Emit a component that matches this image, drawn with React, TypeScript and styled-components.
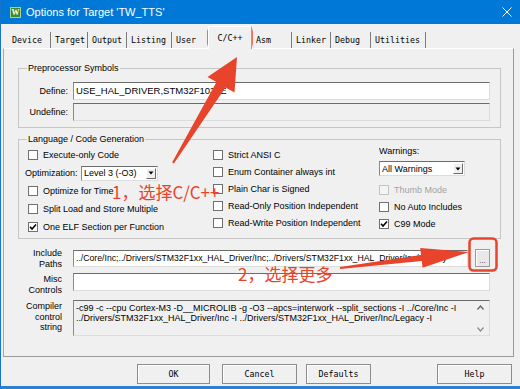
import React from "react";
import styled, { createGlobalStyle } from "styled-components";

const UI = `"Liberation Sans", Arial, sans-serif`;
const MONO = `"DejaVu Sans Mono", "Liberation Mono", monospace`;
const RED = "#e8442c";

const Global = createGlobalStyle`
  html, body { margin: 0; padding: 0; background: #f0f0f0; }
  body { width: 520px; height: 389px; overflow: hidden; }
`;

const Window = styled.div`
  position: relative;
  width: 520px;
  height: 389px;
  box-sizing: border-box;
  background: #f0f0f0;
  border-left: 1px solid #1a73c9;
  border-bottom: 3px solid #2b80d6;
  display: flex;
  flex-direction: column;
  font-family: ${UI};
  font-size: 9px;
  color: #000;
  overflow: hidden;
`;

const TitleBar = styled.div`
  height: 24px;
  flex: none;
  background: #0078d7;
  display: flex;
  align-items: center;
  padding-left: 9px;
  gap: 5px;
  color: #fff;
  font-family: ${UI};
  font-size: 11px;
`;

const AppIcon = styled.span`
  width: 11px;
  height: 11px;
  box-sizing: border-box;
  background: #3f8a2a;
  border: 1px solid #a9d08e;
  color: #fff;
  font: bold 8px/9px "Liberation Serif", serif;
  text-align: center;
  display: inline-block;
`;

const TitleText = styled.span`
  flex: 1;
  white-space: nowrap;
`;

const CloseBox = styled.span`
  width: 10px;
  height: 10px;
  margin-right: 8px;
  display: flex;
`;

const TabStrip = styled.div`
  display: flex;
  align-items: flex-end;
  height: 24px;
  flex: none;
  padding-left: 7px;
  position: relative;
  z-index: 1;
`;

const Tab = styled.div<{ $w: number; $sep?: boolean }>`
  width: ${(p) => p.$w}px;
  height: 16px;
  box-sizing: border-box;
  padding-left: 4px;
  border-right: ${(p) => (p.$sep ? "1px solid #7c7c7c" : "none")};
  font-family: ${MONO};
  font-size: 8.3px;
  line-height: 16px;
  white-space: nowrap;
`;

const ActiveTab = styled.div<{ $w: number }>`
  width: ${(p) => p.$w}px;
  height: 23px;
  margin-bottom: -1px;
  box-sizing: border-box;
  background: #f0f0f0;
  border-top: 1px solid #fff;
  border-left: 1px solid #fff;
  border-right: 1px solid #a0a0a0;
  display: flex;
  align-items: center;
  justify-content: center;
  font-family: ${MONO};
  font-size: 8.3px;
  white-space: nowrap;
`;

const Panel = styled.div`
  margin: 0 6px 0 2px;
  flex: none;
  border-top: 1px solid #ffffff;
  border-left: 1px solid #a8a8a8;
  border-right: 1px solid #9a9a9a;
  border-bottom: 1px solid #9a9a9a;
  padding: 14px 12px 20px 14px;
  display: flex;
  flex-direction: column;
`;

const Group = styled.fieldset<{ $mt: number }>`
  margin: ${(p) => p.$mt}px 0 0 0;
  padding: 0;
  border: 1px solid #c6c6c6;
  min-inline-size: 0;
`;

const Caption = styled.legend`
  margin-left: 8px;
  padding: 0 1px;
  font-size: 9px;
  line-height: 10px;
`;

const SymbolsGrid = styled.div`
  display: grid;
  grid-template-columns: 49px 417px;
  column-gap: 5px;
  row-gap: 3px;
  grid-auto-rows: 18px;
  padding: 9px 0 6px 0;
`;

const FieldLabel = styled.div`
  text-align: right;
  align-self: center;
  white-space: nowrap;
`;

const TextBox = styled.div<{ $bg?: string; $fs?: number; $h?: number }>`
  height: ${(p) => p.$h ?? 18}px;
  box-sizing: border-box;
  background: ${(p) => p.$bg ?? "#fff"};
  border-top: 1px solid #6b6b6b;
  border-left: 1px solid #8a8a8a;
  border-right: 1px solid #dcdcdc;
  border-bottom: 1px solid #dcdcdc;
  padding-left: 2px;
  font-size: ${(p) => p.$fs ?? 9}px;
  line-height: ${(p) => (p.$h ?? 18) - 2}px;
  white-space: nowrap;
  overflow: hidden;
  flex: 1;
  min-width: 0;
`;

const CodeGenGrid = styled.div`
  display: grid;
  grid-template-columns: 185px 166px 1fr;
  padding: 2px 0 2px 9px;
`;

const Column = styled.div<{ $row: number }>`
  display: grid;
  grid-auto-rows: ${(p) => p.$row}px;
  align-content: start;
`;

const StackColumn = styled.div`
  display: flex;
  flex-direction: column;
  align-items: flex-start;
`;

const CheckRow = styled.div<{ $h?: number; $off?: boolean }>`
  height: ${(p) => p.$h ?? 18}px;
  display: flex;
  align-items: center;
  gap: 5px;
  white-space: nowrap;
  color: ${(p) => (p.$off ? "#a3a3a3" : "#000")};
`;

const Box = styled.span<{ $off?: boolean }>`
  width: 10px;
  height: 10px;
  box-sizing: border-box;
  flex: none;
  background: ${(p) => (p.$off ? "#f4f4f4" : "#fff")};
  border: 1px solid ${(p) => (p.$off ? "#c4c4c4" : "#707070")};
  display: flex;
  align-items: center;
  justify-content: center;
`;

const OptRow = styled.div`
  display: flex;
  align-items: center;
  margin-left: -3px;
  white-space: nowrap;
`;

const OptLabel = styled.span`
  width: 56px;
  flex: none;
`;

const Select = styled.div<{ $w: number }>`
  width: ${(p) => p.$w}px;
  height: 15px;
  box-sizing: border-box;
  background: #fff;
  border-top: 1px solid #6b6b6b;
  border-left: 1px solid #8a8a8a;
  border-right: 1px solid #dcdcdc;
  border-bottom: 1px solid #dcdcdc;
  display: flex;
  align-items: center;
`;

const SelectValue = styled.span`
  flex: 1;
  padding-left: 2px;
  font-size: 9px;
  white-space: nowrap;
`;

const DropButton = styled.span`
  width: 10px;
  height: 11px;
  margin-right: 1px;
  box-sizing: border-box;
  background: #f0f0f0;
  border-top: 1px solid #fff;
  border-left: 1px solid #fff;
  border-right: 1px solid #6a6a6a;
  border-bottom: 1px solid #6a6a6a;
  display: flex;
  align-items: center;
  justify-content: center;
`;

const WarnLabel = styled.div`
  height: 10px;
  line-height: 10px;
  margin-bottom: 5px;
`;

const Spacer = styled.div<{ $h: number }>`
  height: ${(p) => p.$h}px;
  flex: none;
`;

const FieldRow = styled.div<{ $h: number; $mt: number }>`
  display: grid;
  grid-template-columns: 44px 417px;
  column-gap: 11px;
  height: ${(p) => p.$h}px;
  margin-top: ${(p) => p.$mt}px;
`;

const SideLabel = styled.div`
  text-align: right;
  line-height: 10.5px;
  padding-top: 1px;
  white-space: nowrap;
`;

const FieldLine = styled.div`
  display: flex;
  align-items: center;
  gap: 7px;
`;

const BrowseButton = styled.div`
  width: 15px;
  height: 18px;
  box-sizing: border-box;
  flex: none;
  background: #e8e8e8;
  border: 1px solid #9a9a9a;
  box-shadow: inset 1px 1px 0 #fff;
  display: flex;
  align-items: flex-end;
  justify-content: center;
  font-size: 8px;
  line-height: 11px;
  color: #333;
`;

const CompileBox = styled.div`
  height: 36px;
  box-sizing: border-box;
  background: #f0f0f0;
  border-top: 1px solid #6b6b6b;
  border-left: 1px solid #8a8a8a;
  border-right: 1px solid #dcdcdc;
  border-bottom: 1px solid #dcdcdc;
  display: flex;
`;

const CompileText = styled.div`
  flex: 1;
  padding: 2px 0 0 2px;
  line-height: 10px;
  font-size: 9px;
  overflow: hidden;
`;

const CompileLine = styled.div`
  white-space: nowrap;
`;

const ScrollColumn = styled.div`
  width: 17px;
  flex: none;
  display: flex;
  flex-direction: column;
  justify-content: space-between;
  align-items: center;
  padding: 4px 0 3px;
  box-sizing: border-box;
`;

const ButtonRow = styled.div`
  display: flex;
  padding: 7px 0 0 136px;
  flex: none;
`;

const DlgButton = styled.div<{ $w: number; $ml: number }>`
  width: ${(p) => p.$w}px;
  margin-left: ${(p) => p.$ml}px;
  height: 20px;
  box-sizing: border-box;
  border: 1px solid #8c8c8c;
  background: #f0f0f0;
  box-shadow: inset 1px 1px 0 #fff;
  display: flex;
  align-items: center;
  justify-content: center;
  font-family: ${MONO};
  font-size: 8.3px;
`;

const Overlay = styled.svg`
  position: absolute;
  left: -1px;
  top: 0;
  pointer-events: none;
`;

const Note = styled.span<{ $x: number; $y: number }>`
  position: absolute;
  left: ${(p) => p.$x - 1}px;
  top: ${(p) => p.$y}px;
  color: ${RED};
  font-family: "Noto Sans CJK SC", "Noto Sans", sans-serif;
  font-size: 17px;
  line-height: 17px;
  white-space: nowrap;
  pointer-events: none;
`;

const Check = () => (
  <svg width="8" height="8" viewBox="0 0 8 8">
    <path d="M1 3.8 L3 6 L7 1.5" fill="none" stroke="#000" strokeWidth="1.6" />
  </svg>
);

const CheckItem = ({ label, checked, off, h }: { label: string; checked?: boolean; off?: boolean; h?: number }) => (
  <CheckRow $h={h} $off={off}>
    <Box $off={off}>{checked ? <Check /> : null}</Box>
    <span>{label}</span>
  </CheckRow>
);

const Arrow = () => (
  <svg width="6" height="4" viewBox="0 0 6 4">
    <path d="M0.5 0.5 L5.5 0.5 L3 3.5 Z" fill="#000" />
  </svg>
);

const Combo = ({ w, value }: { w: number; value: string }) => (
  <Select $w={w}>
    <SelectValue>{value}</SelectValue>
    <DropButton>
      <Arrow />
    </DropButton>
  </Select>
);

const tabs: { label: string; w: number; sep?: boolean; active?: boolean }[] = [
  { label: "Device", w: 43, sep: true },
  { label: "Target", w: 37, sep: true },
  { label: "Output", w: 39, sep: true },
  { label: "Listing", w: 45, sep: true },
  { label: "User", w: 36 },
  { label: "C/C++", w: 44, active: true },
  { label: "Asm", w: 40, sep: true },
  { label: "Linker", w: 39, sep: true },
  { label: "Debug", w: 40, sep: true },
  { label: "Utilities", w: 55, sep: true },
];

export default function App() {
  return (
    <>
      <Global />
      <Window>
        <TitleBar>
          <AppIcon>W</AppIcon>
          <TitleText>Options for Target 'TW_TTS'</TitleText>
          <CloseBox>
            <svg width="10" height="10" viewBox="0 0 10 10">
              <path d="M0.5 0.5 L9.5 9.5 M9.5 0.5 L0.5 9.5" stroke="#fff" strokeWidth="1" />
            </svg>
          </CloseBox>
        </TitleBar>

        <TabStrip>
          {tabs.map((t) =>
            t.active ? (
              <ActiveTab key={t.label} $w={t.w}>
                {t.label}
              </ActiveTab>
            ) : (
              <Tab key={t.label} $w={t.w} $sep={t.sep}>
                {t.label}
              </Tab>
            )
          )}
        </TabStrip>

        <Panel>
          <Group $mt={0}>
            <Caption>Preprocessor Symbols</Caption>
            <SymbolsGrid>
              <FieldLabel>Define:</FieldLabel>
              <TextBox $fs={9.5}>USE_HAL_DRIVER,STM32F103xE</TextBox>
              <FieldLabel>Undefine:</FieldLabel>
              <TextBox $bg="#f0f0f0" />
            </SymbolsGrid>
          </Group>

          <Group $mt={6}>
            <Caption>Language / Code Generation</Caption>
            <CodeGenGrid>
              <Column $row={18}>
                <CheckItem label="Execute-only Code" />
                <OptRow>
                  <OptLabel>Optimization:</OptLabel>
                  <Combo w={77} value="Level 3 (-O3)" />
                </OptRow>
                <CheckItem label="Optimize for Time" />
                <CheckItem label="Split Load and Store Multiple" />
                <CheckItem label="One ELF Section per Function" checked />
              </Column>
              <Column $row={17}>
                <CheckItem h={17} label="Strict ANSI C" />
                <CheckItem h={17} label="Enum Container always int" />
                <CheckItem h={17} label="Plain Char is Signed" />
                <CheckItem h={17} label="Read-Only Position Independent" />
                <CheckItem h={17} label="Read-Write Position Independent" />
              </Column>
              <StackColumn>
                <WarnLabel>Warnings:</WarnLabel>
                <Combo w={86} value="All Warnings" />
                <Spacer $h={5} />
                <CheckItem h={17} label="Thumb Mode" off />
                <CheckItem h={17} label="No Auto Includes" />
                <CheckItem h={17} label="C99 Mode" checked />
              </StackColumn>
            </CodeGenGrid>
          </Group>

          <FieldRow $h={19} $mt={8}>
            <SideLabel>
              Include
              <br />
              Paths
            </SideLabel>
            <FieldLine>
              <TextBox $h={17} $fs={8.7}>
                ../Core/Inc;../Drivers/STM32F1xx_HAL_Driver/Inc;../Drivers/STM32F1xx_HAL_Driver/Inc/Legacy
              </TextBox>
              <BrowseButton>...</BrowseButton>
            </FieldLine>
          </FieldRow>

          <FieldRow $h={18} $mt={7}>
            <SideLabel>
              Misc
              <br />
              Controls
            </SideLabel>
            <TextBox />
          </FieldRow>

          <FieldRow $h={36} $mt={9}>
            <SideLabel>
              Compiler
              <br />
              control
              <br />
              string
            </SideLabel>
            <CompileBox>
              <CompileText>
                <CompileLine>-c99 -c --cpu Cortex-M3 -D__MICROLIB -g -O3 --apcs=interwork --split_sections -I ../Core/Inc -I</CompileLine>
                <CompileLine>../Drivers/STM32F1xx_HAL_Driver/Inc -I ../Drivers/STM32F1xx_HAL_Driver/Inc/Legacy -I</CompileLine>
              </CompileText>
              <ScrollColumn>
                <svg width="7" height="5" viewBox="0 0 7 5">
                  <path d="M0.5 4.5 L3.5 1 L6.5 4.5" fill="none" stroke="#606060" strokeWidth="1.2" />
                </svg>
                <svg width="7" height="5" viewBox="0 0 7 5">
                  <path d="M0.5 0.5 L3.5 4 L6.5 0.5" fill="none" stroke="#8a8a8a" strokeWidth="1.2" />
                </svg>
              </ScrollColumn>
            </CompileBox>
          </FieldRow>
        </Panel>

        <ButtonRow>
          <DlgButton $w={73} $ml={0}>OK</DlgButton>
          <DlgButton $w={75} $ml={12}>Cancel</DlgButton>
          <DlgButton $w={65} $ml={9}>Defaults</DlgButton>
          <DlgButton $w={75} $ml={66}>Help</DlgButton>
        </ButtonRow>

        <Overlay width="520" height="389" viewBox="0 0 520 389">
          <rect x="208.5" y="27.5" width="43" height="20" rx="4" fill="none" stroke={RED} strokeWidth="2.5" />
          <rect x="469.5" y="238.5" width="27" height="32" rx="4" fill="none" stroke={RED} strokeWidth="2.5" />
          <polygon
            points="237,57 234.5,92.5 225.5,87.5 173.9,163.5 172.1,162.5 216.5,82 207.5,77"
            fill={RED}
          />
          <polygon
            points="469,252 422.6,267.8 421.8,260.9 340.1,269 339.9,267 421,254.9 420.2,248"
            fill={RED}
          />
        </Overlay>
        <Note $x={112} $y={183}>1，选择C/C++</Note>
        <Note $x={238} $y={265}>2，选择更多</Note>
      </Window>
    </>
  );
}
